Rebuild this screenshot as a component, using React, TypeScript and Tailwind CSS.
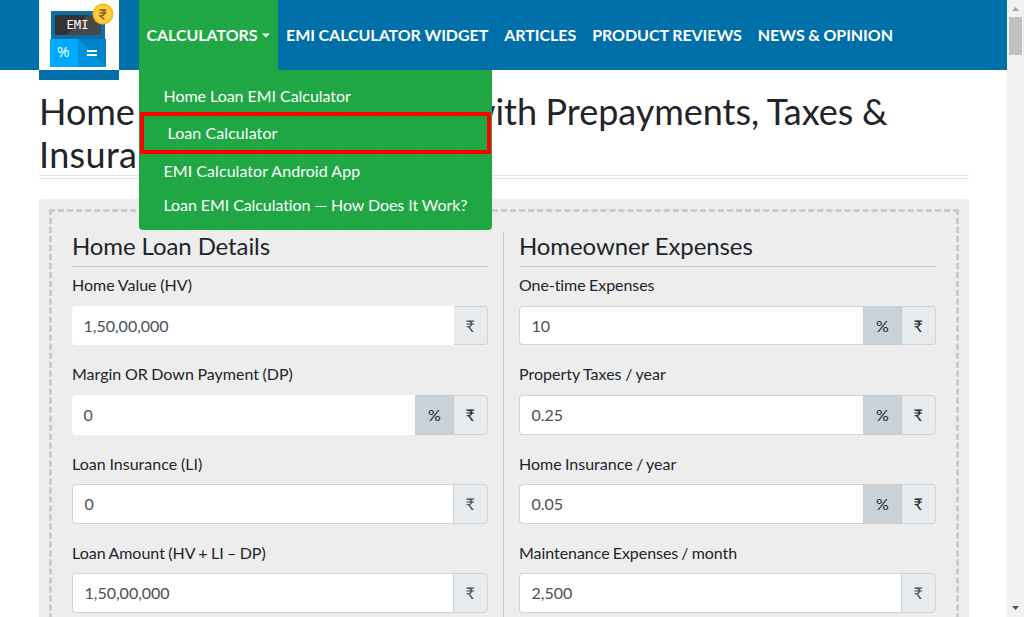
import React from 'react';

type Field = { label: string; value: string; spacing: string; percent?: boolean; plain?: boolean; dim?: boolean };

const LOAN_FIELDS: Field[] = [
  { label: 'Home Value (HV)', value: '1,50,00,000', spacing: '[word-spacing:-0.4px]', plain: true, dim: true },
  { label: 'Margin OR Down Payment (DP)', value: '0', spacing: '[word-spacing:-0.5px]', percent: true, plain: true },
  { label: 'Loan Insurance (LI)', value: '0', spacing: '[word-spacing:-0.2px]', dim: true },
  { label: 'Loan Amount (HV + LI – DP)', value: '1,50,00,000', spacing: '[word-spacing:-0.75px]', dim: true },
];

const OWNER_FIELDS: Field[] = [
  { label: 'One-time Expenses', value: '10', spacing: 'tracking-[-0.07px] [word-spacing:-0.5px]', percent: true },
  { label: 'Property Taxes / year', value: '0.25', spacing: '[word-spacing:-0.5px]', percent: true },
  { label: 'Home Insurance / year', value: '0.05', spacing: '[word-spacing:-0.8px]', percent: true },
  { label: 'Maintenance Expenses / month', value: '2,500', spacing: 'tracking-[-0.05px] [word-spacing:-0.9px]', dim: true },
];

const NAV_LINKS = ['EMI CALCULATOR WIDGET', 'ARTICLES', 'PRODUCT REVIEWS', 'NEWS & OPINION'];

const WEAVE =
  'bg-[repeating-linear-gradient(90deg,rgba(0,0,0,0.018)_0px,rgba(0,0,0,0.018)_2px,transparent_2px,transparent_5px)]';

function Logo() {
  return (
    <svg width="80" height="70" viewBox="0 0 80 70" className="block bg-white">
      <rect x="12" y="11" width="54" height="28" fill="#0a6fa6" />
      <rect x="16" y="15" width="46" height="20" fill="#333" />
      <path d="M62 15V35H28L48 15Z" fill="#484848" />
      <rect x="11" y="39" width="28" height="28" fill="#00abff" />
      <rect x="39" y="39" width="28" height="28" fill="#0092dc" />
      <path d="M39 39H67V67Z" fill="#0082c6" />
      <text x="27.5" y="29" fontSize="12" fontFamily="DejaVu Sans Mono, monospace" fill="#fff" textLength="22" lengthAdjust="spacingAndGlyphs">EMI</text>
      <text x="18" y="57" fontSize="14" fontFamily="Open Sans, sans-serif" fill="#fff" textLength="12.5" lengthAdjust="spacingAndGlyphs">%</text>
      <path d="M48 51H58M48 55H58" stroke="#fff" strokeWidth="2" />
      <circle cx="64" cy="14" r="10.5" fill="#f7b92b" />
      <circle cx="64" cy="14" r="8.5" fill="#ffce3a" />
      <path d="M60.5 10H67.5M60.5 13H67.5M61 10C67 9.5 67 16 61 16L65.5 19.5" fill="none" stroke="#8c5726" strokeWidth="1.5" />
    </svg>
  );
}

function FieldRow({ label, value, spacing, percent, plain, dim }: Field) {
  return (
    <div className="mb-[16.75px]">
      <label className={`mb-[8.75px] block pt-[0.25px] text-base leading-6 text-[#212529] ${spacing}`}>{label}</label>
      <div className="flex h-[39.4px]">
        <div
          className={`flex min-w-0 flex-1 items-center rounded-l bg-white pt-[0.7px] text-base text-[#495057] ${
            plain ? 'pl-[11.5px]' : 'border border-r-0 border-[#ced4da] pl-[11.5px]'
          }`}
        >
          {value}
        </div>
        {percent && (
          <div className="flex w-[39px] items-center justify-center border border-[#c4ced6] bg-[#c9d2d9] text-base text-[#212529]">
            %
          </div>
        )}
        <div
          className={`flex items-center justify-center rounded-r border border-[#ced4da] bg-[#e7ebee] pr-px text-base ${
            percent || plain ? 'w-[34px] border-l-0' : 'w-[35px]'
          } ${dim ? 'text-[#495057]' : 'text-[#212529]'}`}
        >
          ₹
        </div>
      </div>
    </div>
  );
}

function Column({ title, fields }: { title: string; fields: Field[] }) {
  return (
    <section className="-mt-px">
      <h2 className="mb-[6px] h-9 border-b border-[#cccccc] text-2xl leading-[29px] tracking-[-0.1px] text-[#212529]">
        {title}
      </h2>
      {fields.map((f) => (
        <FieldRow key={f.label} {...f} />
      ))}
    </section>
  );
}

function CalculatorMenu() {
  return (
    <div className={`absolute left-0 top-[70px] z-20 h-40 w-[353px] rounded-b bg-[#20a845] pt-2 text-base text-white ${WEAVE}`}>
      <div className="flex h-[34px] items-center pl-[24.5px] pt-0.5 tracking-[-0.04px]">Home Loan EMI Calculator</div>
      <div className="ml-px flex h-[42px] w-[351px] items-center border-4 border-[#ff0000] pl-[23.5px] tracking-[0.07px]">
        Loan Calculator
      </div>
      <div className="flex h-[34px] items-center pl-[24.5px] tracking-[0.05px]">EMI Calculator Android App</div>
      <div className="flex h-[34px] items-center pl-[24.5px] tracking-[-0.08px]">
        Loan EMI Calculation — How Does It Work?
      </div>
    </div>
  );
}

export default function App() {
  return (
    <div className="flex h-[617px] w-[1024px] overflow-hidden bg-white font-['Lato','Noto_Sans',sans-serif]">
      <main className="w-[1007px] shrink-0">
        <header className={`flex h-[70px] bg-[#0070aa] pl-[39px] ${WEAVE}`}>
          <a className={`block h-20 w-20 bg-[#0070aa] ${WEAVE}`}>
            <Logo />
          </a>
          <nav className="ml-5 flex text-base font-bold tracking-[-0.05px] text-white">
            <div className={`relative flex h-[70px] w-[139px] items-center bg-[#20a845] pl-[7.5px] ${WEAVE}`}>
              <span>CALCULATORS</span>
              <svg width="8" height="5" viewBox="0 0 8 5" className="ml-1">
                <path d="M0 0.5H8L4 4.5Z" fill="#fff" />
              </svg>
              <div className="font-normal">
                <CalculatorMenu />
              </div>
            </div>
            {NAV_LINKS.map((l) => (
              <a key={l} className="flex items-center whitespace-nowrap px-2 [word-spacing:-0.2px]">
                {l}
              </a>
            ))}
          </nav>
        </header>
        <div className="ml-[39px] w-[930px]">
          <h1 className="mt-5 h-[89px] border-b-4 border-double border-[#e2e2e2] text-4xl leading-[43.2px] tracking-[-0.03px] text-[#212529] [word-spacing:-0.6px]">
            Home Loan EMI Calculator with Prepayments, Taxes &amp; <span className="tracking-[0.35px]">Insurance</span>
          </h1>
          <div className="mt-5 h-[700px] rounded bg-[#ededed] p-2.5">
            <div className="grid h-full grid-cols-[416px_1px_417px] gap-x-[15px] border-[3px] border-dashed border-[#cccccc] pl-5 pt-5">
              <Column title="Home Loan Details" fields={LOAN_FIELDS} />
              <div className="bg-[#cccccc]" />
              <Column title="Homeowner Expenses" fields={OWNER_FIELDS} />
            </div>
          </div>
        </div>
      </main>
      <aside className="flex w-[17px] flex-col items-center bg-[#f1f1f1]">
        <svg width="17" height="17" viewBox="0 0 17 17">
          <path d="M5 11H12L8.5 7Z" fill="#a3a3a3" />
        </svg>
        <div className="h-[38px] w-[13px] bg-[#c1c1c1]" />
        <svg width="17" height="17" viewBox="0 0 17 17" className="mt-auto">
          <path d="M5 6H12L8.5 10Z" fill="#505050" />
        </svg>
      </aside>
    </div>
  );
}
